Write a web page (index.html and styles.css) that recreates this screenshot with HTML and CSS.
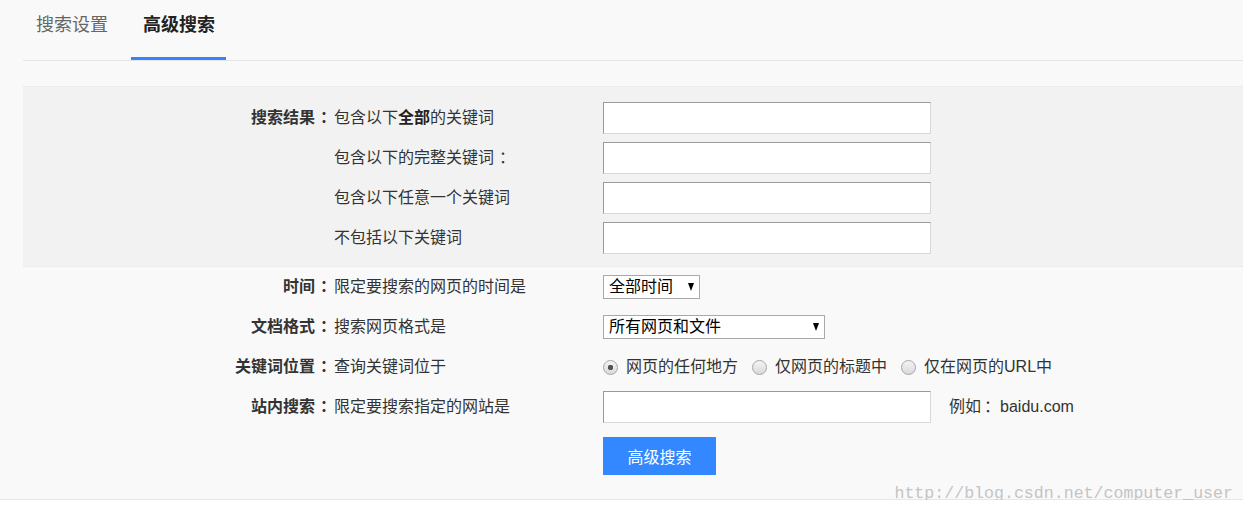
FILE: index.html
```html
<!DOCTYPE html>
<html lang="zh-CN">
<head>
    <meta charset="UTF-8">
    <title>高级搜索</title>
    <link rel="stylesheet" href="styles.css">
</head>
<body>

    <div class="page">
        <!-- Tabs -->
        <div class="tabs">
            <a class="tab" href="#">搜索设置</a>
            <a class="tab active" href="#">高级搜索</a>
        </div>

        <form class="adv">
            <!-- Keywords -->
            <div class="group">
                <div class="row">
                    <label class="label">搜索结果<span class="colon">：</span></label>
                    <span class="desc">包含以下<b>全部</b>的关键词</span>
                    <input type="text" class="text">
                </div>
                <div class="row">
                    <span class="label"></span>
                    <span class="desc">包含以下的完整关键词<span class="colon">：</span></span>
                    <input type="text" class="text">
                </div>
                <div class="row">
                    <span class="label"></span>
                    <span class="desc">包含以下任意一个关键词</span>
                    <input type="text" class="text">
                </div>
                <div class="row">
                    <span class="label"></span>
                    <span class="desc">不包括以下关键词</span>
                    <input type="text" class="text">
                </div>
            </div>

            <div class="row">
                <label class="label">时间<span class="colon">：</span></label>
                <span class="desc">限定要搜索的网页的时间是</span>
                <span class="select select-time">
                    <select>
                        <option>全部时间</option>
                        <option>最近一天</option>
                        <option>最近一周</option>
                    </select>
                </span>
            </div>

            <div class="row">
                <label class="label">文档格式<span class="colon">：</span></label>
                <span class="desc">搜索网页格式是</span>
                <span class="select select-type">
                    <select>
                        <option>所有网页和文件</option>
                        <option>PDF</option>
                    </select>
                </span>
            </div>

            <div class="row">
                <label class="label">关键词位置<span class="colon">：</span></label>
                <span class="desc">查询关键词位于</span>
                <span class="radios">
                    <label class="radio"><input type="radio" name="pos" checked>网页的任何地方</label>
                    <label class="radio"><input type="radio" name="pos">仅网页的标题中</label>
                    <label class="radio"><input type="radio" name="pos">仅在网页的URL中</label>
                </span>
            </div>

            <div class="row">
                <label class="label">站内搜索<span class="colon">：</span></label>
                <span class="desc">限定要搜索指定的网站是</span>
                <span class="site">
                    <input type="text" class="text">
                    <span class="hint">例如<span class="colon">：</span>baidu.com</span>
                </span>
            </div>

            <div class="row row-submit">
                <span class="label"></span>
                <span class="desc"></span>
                <button type="button" class="btn">高级搜索</button>
            </div>
        </form>

        <span class="watermark">http://blog.csdn.net/computer_user</span>
    </div>

</body>
</html>
```

FILE: styles.css
```css
body {
    margin: 0;
    background-color: #ffffff;
    font-family: "Liberation Sans", "Noto Sans CJK SC", sans-serif;
    color: #333333;
    font-size: 16px;
}

.page {
    position: relative;
    background-color: #f9f9f9;
    padding-left: 23px;
    padding-bottom: 24px;
    border-bottom: 1px solid #e6e6e6;
}

/* Tabs */
.tabs {
    display: flex;
    gap: 11px;
    height: 60px;
    border-bottom: 1px solid #e5e5e5;
}

.tab {
    display: block;
    box-sizing: border-box;
    height: 60px;
    padding: 0 12px 0 13px;
    line-height: 50px;
    font-size: 18px;
    color: #666666;
    text-decoration: none;
    border-bottom: 3px solid transparent;
}

.tab.active {
    padding: 0 11px 0 12px;
    color: #222222;
    font-weight: bold;
    border-bottom-color: #3385ff;
}

/* Form */
.adv {
    margin-top: 25px;
}

.group {
    background-color: #f2f2f2;
    border-top: 1px solid #ececec;
    border-bottom: 1px solid #ececec;
    padding: 11px 0 8px;
}

.row {
    display: grid;
    grid-template-columns: 308px 272px 1fr;
    align-items: center;
    height: 40px;
    line-height: 20px;
}

.label {
    text-align: right;
    font-weight: bold;
    color: #333333;
}

/* full-width colon sits in the middle of its box, as in the original font */
.colon {
    display: inline-block;
    width: 1em;
    padding-left: 5px;
    margin-right: -5px;
    text-align: left;
}

.desc {
    padding-left: 3px;
    color: #333333;
}

.desc b {
    color: #222222;
}

.text {
    box-sizing: border-box;
    width: 328px;
    height: 32px;
    margin: 0;
    padding: 0 6px;
    background-color: #ffffff;
    border: 1px solid;
    border-color: #999999 #d8d8d8 #d8d8d8 #999999;
    font-size: 16px;
    outline: none;
}

/* Selects */
.select {
    position: relative;
    display: inline-block;
    justify-self: start;
}

.select select {
    appearance: none;
    -webkit-appearance: none;
    box-sizing: border-box;
    height: 24px;
    margin: 0;
    padding: 0 0 0 5px;
    background-color: #ffffff;
    border: 1px solid #a9a9a9;
    border-radius: 0;
    font-family: inherit;
    font-size: 16px;
    line-height: 22px;
    color: #000000;
}

.select-time select {
    width: 97px;
}

.select-type select {
    width: 222px;
}

.select::after {
    content: "";
    position: absolute;
    top: 8px;
    right: 6px;
    border-left: 3.5px solid transparent;
    border-right: 3.5px solid transparent;
    border-top: 8px solid #000000;
    pointer-events: none;
}

/* Radios */
.radios {
    display: flex;
    align-items: center;
    gap: 14px;
    white-space: nowrap;
}

.radio {
    display: flex;
    align-items: center;
    gap: 8px;
    color: #333333;
}

.radio input {
    appearance: none;
    -webkit-appearance: none;
    box-sizing: border-box;
    width: 15px;
    height: 15px;
    margin: 0;
    border: 1px solid #a6a6a6;
    border-radius: 50%;
    background: linear-gradient(#f4f4f4, #d9d9d9);
}

.radio input:checked {
    background: radial-gradient(circle, #555555 0, #555555 2.5px, transparent 3px),
                linear-gradient(#f4f4f4, #d9d9d9);
}

/* Site */
.site {
    display: flex;
    align-items: center;
    gap: 18px;
}

.hint {
    color: #333333;
    white-space: nowrap;
}

.hint .colon {
    width: auto;
    padding-left: 3px;
    margin-right: 0;
}

.row-submit {
    height: 38px;
    margin-top: 10px;
}

.btn {
    justify-self: start;
    width: 113px;
    height: 38px;
    margin: 0;
    padding: 0;
    background-color: #3388ff;
    border: none;
    color: #ffffff;
    font-family: inherit;
    font-size: 16px;
    cursor: pointer;
}

/* Watermark */
.watermark {
    position: absolute;
    right: 10px;
    bottom: -5px;
    font-family: "Liberation Mono", monospace;
    font-size: 16.6px;
    line-height: 20px;
    color: #c4c4c4;
    pointer-events: none;
}
```
